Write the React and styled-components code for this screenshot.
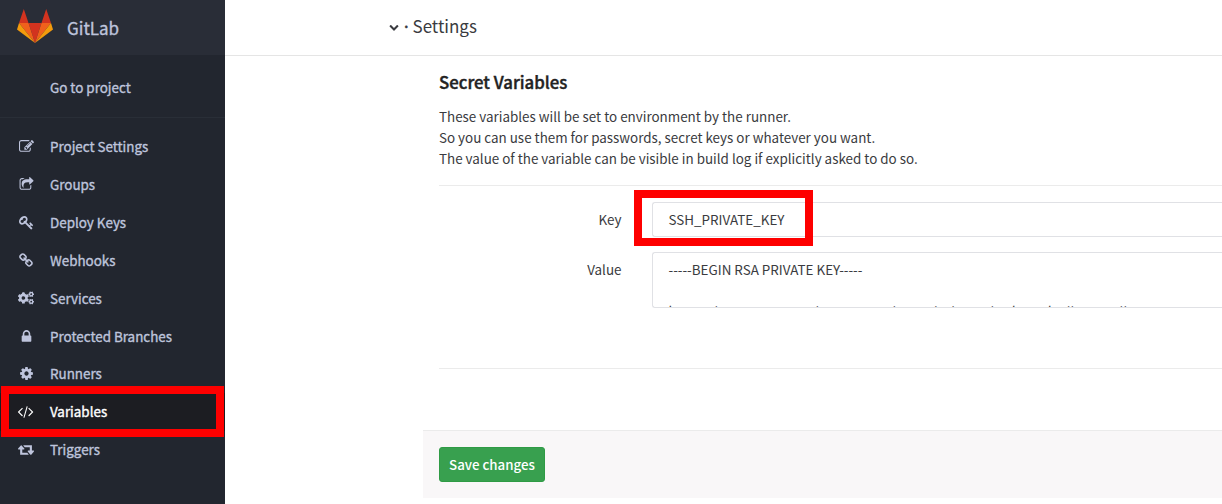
import React from "react";
import styled, { createGlobalStyle } from "styled-components";
import { FaCogs } from "react-icons/fa";

const GlobalStyle = createGlobalStyle`
  *, *::before, *::after { box-sizing: border-box; }
  body {
    margin: 0;
    background: #fff;
    color: #3a3b40;
    font-family: "Noto Sans CJK SC", "Noto Sans", sans-serif;
    font-size: 13.42px;
    line-height: 21px;
    overflow: hidden;
  }
  h4, p { margin: 0; }
`;

const Page = styled.div`
  display: flex;
  width: 1222px;
  height: 504px;
  overflow: hidden;
`;

const Sidebar = styled.aside`
  flex: 0 0 225px;
  height: 504px;
  background: #22262f;
  color: #bec4dc;
  -webkit-text-stroke: 0.35px currentColor;
`;

const Brand = styled.div`
  display: flex;
  align-items: center;
  gap: 14px;
  height: 55px;
  padding: 0 0 0 17px;
  background: #292d37;
  font-size: 17px;
`;

const BrandLogo = styled.svg`
  display: block;
  width: 36px;
  height: 34px;
  margin-top: -4px;
`;

const BrandName = styled.span`
  margin-top: -1px;
`;

const BackLink = styled.div`
  display: flex;
  align-items: center;
  height: 63px;
  padding: 3px 0 0 50px;
  border-bottom: 1px solid #292e37;
`;

const Nav = styled.nav`
  padding-top: 10px;
`;

const NavItem = styled.div`
  position: relative;
  display: flex;
  align-items: center;
  gap: 16px;
  height: 37.85px;
  padding-left: 18px;
  color: ${(p) => (p.$active ? "#fff" : "inherit")};
  background: ${(p) => (p.$active ? "#1c1d22" : "transparent")};
`;

const IconSlot = styled.span`
  display: flex;
  flex: 0 0 16px;
  min-width: 0;
  justify-content: center;
`;

const Glyph = styled.svg`
  display: block;
  flex: none;
  height: ${(p) => p.$size || 15}px;
  fill: currentColor;
`;

const Highlight = styled.div`
  position: absolute;
  left: ${(p) => p.$left};
  top: ${(p) => p.$top};
  width: ${(p) => p.$width};
  height: ${(p) => p.$height};
  border: 8px solid #fe0000;
  z-index: 2;
`;

const Main = styled.main`
  flex: 1;
  min-width: 0;
`;

const TitleBar = styled.header`
  display: flex;
  align-items: center;
  gap: 5px;
  height: 56px;
  padding: 0 0 2px 164px;
  border-bottom: 1px solid #e5e5e5;
  font-size: 17px;
`;

const Dot = styled.span`
  width: 3.5px;
  font-family: "Noto Sans", sans-serif;
  -webkit-text-stroke: 0.5px currentColor;
`;

const PageTitle = styled.span`
  margin: -2px 0 0 0;
`;

const Content = styled.section`
  padding: 14px 0 0 214px;
`;

const Heading = styled.h4`
  color: #222;
  font-size: 16.8px;
  line-height: 24px;
  font-weight: 500;
  -webkit-text-stroke: 0.4px currentColor;
`;

const Intro = styled.p`
  margin-top: 12px;
  padding-bottom: 16px;
  border-bottom: 1px solid #ebebeb;
`;

const Row = styled.div`
  position: relative;
  display: flex;
  margin-top: ${(p) => p.$gap}px;
`;

const Label = styled.label`
  width: 183px;
  margin-right: 30px;
  padding: 7px 0.5px 0 0;
  text-align: right;
`;

const Field = styled.div`
  flex: 1;
  height: ${(p) => p.$height}px;
  padding: 6px 15.5px;
  border: 1px solid #e0e1e5;
  border-right: 0;
  border-radius: 3px 0 0 3px;
  overflow: hidden;
  white-space: pre;
`;

const Divider = styled.div`
  height: 1px;
  margin-top: 60px;
  background: #ebebeb;
`;

const Footer = styled.footer`
  height: 68px;
  margin: 61px 0 0 198px;
  padding: 16px;
  background: #f9f7f8;
  border-top: 1px solid #ebebeb;
`;

const SaveButton = styled.button`
  width: 106px;
  height: 35px;
  padding: 0 0 1px;
  border: 1px solid #2f9b45;
  border-radius: 3px;
  background: #38a04f;
  color: #fff;
  font: 500 13.3px/21px "Noto Sans CJK SC", sans-serif;
  white-space: nowrap;
`;

const ICONS = {
  edit: "M888 1184l116-116-152-152-116 116v56h96v96h56zm440-720q-16-16-33 1l-350 350q-17 17-1 33t33-1l350-350q17-17 1-33zm80 594v190q0 119-84.5 203.5t-203.5 84.5h-832q-119 0-203.5-84.5t-84.5-203.5v-832q0-119 84.5-203.5t203.5-84.5h832q63 0 117 25 15 7 18 23 3 17-9 29l-49 49q-14 14-32 8-23-6-45-6h-832q-66 0-113 47t-47 113v832q0 66 47 113t113 47h832q66 0 113-47t47-113v-126q0-13 9-22l64-64q15-15 35-7t20 29zm-96-738l288 288-672 672h-288v-288zm444 132l-92 92-288-288 92-92q28-28 68-28t68 28l152 152q28 28 28 68t-28 68z",
  share: "M1472 989v259q0 119-84.5 203.5t-203.5 84.5h-832q-119 0-203.5-84.5t-84.5-203.5v-832q0-119 84.5-203.5t203.5-84.5h255q13 0 22.5 9.5t9.5 22.5q0 27-26 32-77 26-133 60-10 4-16 4h-112q-66 0-113 47t-47 113v832q0 66 47 113t113 47h832q66 0 113-47t47-113v-214q0-19 18-29 28-13 54-37 16-16 35-8 21 9 21 29zm237-496l-384 384q-18 19-45 19-12 0-25-5-39-17-39-59v-192h-160q-323 0-438 131-119 137-74 473 3 23-20 34-8 2-12 2-16 0-26-13-10-14-21-31t-39.5-68.5-49.5-99.5-38.5-114-17.5-122q0-49 3.5-91t14-90 28-88 47-81.5 68.5-74 94.5-61.5 124.5-48.5 159.5-30.5 196.5-11h160v-192q0-42 39-59 13-5 25-5 26 0 45 19l384 384q19 19 19 45t-19 45z",
  key: "M832 512q0-80-56-136t-136-56-136 56-56 136q0 42 19 83-41-19-83-19-80 0-136 56t-56 136 56 136 136 56 136-56 56-136q0-42-19-83 41 19 83 19 80 0 136-56t56-136zm851 704q0 17-49 66t-66 49q-9 0-28.5-16t-36.5-33-38.5-40-24.5-26l-96 96 220 220q28 28 28 68 0 42-39 81t-81 39q-40 0-68-28l-671-671q-176 131-365 131-163 0-265.5-102.5t-102.5-265.5q0-160 95-313t248-248 313-95q163 0 265.5 102.5t102.5 265.5q0 189-131 365l355 355 96-96q-3-3-26-24.5t-40-38.5-33-36.5-16-28.5q0-17 49-66t66-49q13 0 23 10 6 6 46 44.5t82 79.5 86.5 86 73 78 28.5 41z",
  link: "M1456 1216q0-40-28-68l-208-208q-28-28-68-28-42 0-72 32 3 3 19 18.5t21.5 21.5 15 19 13 25.5 3.5 27.5q0 40-28 68t-68 28q-15 0-27.5-3.5t-25.5-13-19-15-21.5-21.5-18.5-19q-33 31-33 73 0 40 28 68l206 207q27 27 68 27 40 0 68-26l147-146q28-28 28-67zm-703-705q0-40-28-68l-206-207q-28-28-68-28-39 0-68 27l-147 146q-28 28-28 67 0 40 28 68l208 208q27 27 68 27 42 0 72-31-3-3-19-18.5t-21.5-21.5-15-19-13-25.5-3.5-27.5q0-40 28-68t68-28q15 0 27.5 3.5t25.5 13 19 15 21.5 21.5 18.5 19q33-31 33-73zm895 705q0 120-85 203l-147 146q-83 83-203 83-121 0-204-85l-206-207q-83-83-83-203 0-123 88-209l-88-88q-86 88-208 88-120 0-204-84l-208-208q-84-84-84-204t85-203l147-146q83-83 203-83 121 0 204 85l206 207q83 83 83 203 0 123-88 209l88 88q86-88 208-88 120 0 204 84l208 208q84 84 84 204z",
  lock: "M640 768h512v-192q0-106-75-181t-181-75-181 75-75 181v192zm832 96v576q0 40-28 68t-68 28h-960q-40 0-68-28t-28-68v-576q0-40 28-68t68-28h32v-192q0-184 132-316t316-132 316 132 132 316v192h32q40 0 68 28t28 68z",
  cog: "M1152 896q0-106-75-181t-181-75-181 75-75 181 75 181 181 75 181-75 75-181zm512-109v222q0 12-8 23t-20 13l-185 28q-19 54-39 91 35 50 107 138 10 12 10 25t-9 23q-27 37-99 108t-94 71q-12 0-26-9l-138-108q-44 23-91 38-16 136-29 186-7 28-36 28h-222q-14 0-24.5-8.5t-11.5-21.5l-28-184q-49-16-90-37l-141 107q-10 9-25 9-14 0-25-11-126-114-165-168-7-10-7-23 0-12 8-23 15-21 51-66.5t54-70.5q-27-50-41-99l-183-27q-13-2-21-12.5t-8-23.5v-222q0-12 8-23t19-13l186-28q14-46 39-92-40-57-107-138-10-12-10-24 0-10 9-23 26-36 98.5-107.5t94.5-71.5q13 0 26 10l138 107q44-23 91-38 16-136 29-186 7-28 36-28h222q14 0 24.5 8.5t11.5 21.5l28 184q49 16 90 37l142-107q9-9 24-9 13 0 25 10 129 119 165 170 7 8 7 22 0 12-8 23-15 21-51 66.5t-54 70.5q26 50 41 98l183 28q13 2 21 12.5t8 23.5z",
  code: "M681 1399l-50 50q-10 10-23 10t-23-10l-466-466q-10-10-10-23t10-23l466-466q10-10 23-10t23 10l50 50q10 10 10 23t-10 23l-393 393 393 393q10 10 10 23t-10 23zm591-1067l-373 1291q-4 13-15.5 19.5t-23.5 2.5l-62-17q-13-4-19.5-15.5t-2.5-24.5l373-1291q4-13 15.5-19.5t23.5-2.5l62 17q13 4 19.5 15.5t2.5 24.5zm657 651l-466 466q-10 10-23 10t-23-10l-50-50q-10-10-10-23t10-23l393-393-393-393q-10-10-10-23t10-23l50-50q10-10 23-10t23 10l466 466q10 10 10 23t-10 23z",
  retweet: "M1280 1504q0 13-9.5 22.5t-22.5 9.5h-960q-8 0-13.5-2t-9-7-5.5-8-3-11.5-1-11.5v-600h-192q-26 0-45-19t-19-45q0-24 15-41l320-384q19-22 49-22t49 22l320 384q15 17 15 41 0 26-19 45t-45 19h-192v384h576q16 0 25 11l160 192q7 10 7 21zm640-416q0 24-15 41l-320 384q-20 23-49 23t-49-23l-320-384q-15-17-15-41 0-26 19-45t45-19h192v-384h-576q-16 0-25-12l-160-192q-7-9-7-20 0-13 9.5-22.5t22.5-9.5h960q8 0 13.5 2t9 7 5.5 8 3 11.5 1 11.5v600h192q26 0 45 19t19 45z",
  chevron: "M1683 808l-742 741q-19 19-45 19t-45-19l-742-741q-19-19-19-45.5t19-45.5l166-165q19-19 45-19t45 19l531 531 531-531q19-19 45-19t45 19l166 165q19 19 19 45.5t-19 45.5z",
};

const WIDE = { code: 2048, retweet: 1920 };

function Icon({ name, size }) {
  if (name === "cogs") return <FaCogs size={16} />;
  return (
    <Glyph viewBox={`0 0 ${WIDE[name] || 1792} 1792`} $size={size} aria-hidden="true">
      <path d={ICONS[name]} stroke="none" />
    </Glyph>
  );
}

const NAV = [
  ["edit", "Project Settings"],
  ["share", "Groups"],
  ["key", "Deploy Keys"],
  ["link", "Webhooks"],
  ["cogs", "Services"],
  ["lock", "Protected Branches"],
  ["cog", "Runners"],
  ["code", "Variables"],
  ["retweet", "Triggers"],
];

const KEY_TEXT =
  "-----BEGIN RSA PRIVATE KEY-----\n\nhaaaaalaaaaaaaaaaaaclaaaaaaaaarlaaaaalcclaaaarlccdaaardaallaaaaaallaa";

export default function App() {
  return (
    <>
      <GlobalStyle />
      <Page>
        <Sidebar>
          <Brand>
            <BrandLogo viewBox="0 0 36 34" aria-label="GitLab">
              <path fill="#d2331f" d="M6.8 0 2 14h9.5zM29.2 0 34 14h-9.5z" />
              <path fill="#d2331f" d="M11.5 14h13L18 34z" />
              <path fill="#f0601c" d="M2 14h9.5L18 34zM34 14h-9.5L18 34z" />
              <path fill="#f39b0c" d="M2 14 0 20.5 18 34zM34 14l2 6.5L18 34z" />
            </BrandLogo>
            <BrandName>GitLab</BrandName>
          </Brand>
          <BackLink>Go to project</BackLink>
          <Nav>
            {NAV.map(([icon, text]) => (
              <NavItem key={text} $active={text === "Variables"}>
                <IconSlot>
                  <Icon name={icon} />
                </IconSlot>
                {text}
                {text === "Variables" && (
                  <Highlight $left="1px" $top="-7px" $width="223px" $height="51px" />
                )}
              </NavItem>
            ))}
          </Nav>
        </Sidebar>
        <Main>
          <TitleBar>
            <Icon name="chevron" size={10} />
            <Dot>·</Dot>
            <PageTitle>Settings</PageTitle>
          </TitleBar>
          <Content>
            <Heading>Secret Variables</Heading>
            <Intro>
              These variables will be set to environment by the runner.
              <br />
              So you can use them for passwords, secret keys or whatever you want.
              <br />
              The value of the variable can be visible in build log if explicitly asked to do so.
            </Intro>
            <Row $gap={16}>
              <Label>Key</Label>
              <Field $height={35}>SSH_PRIVATE_KEY</Field>
              <Highlight $left="195px" $top="-12px" $width="179px" $height="56px" />
            </Row>
            <Row $gap={15}>
              <Label>Value</Label>
              <Field $height={56}>{KEY_TEXT}</Field>
            </Row>
            <Divider />
          </Content>
          <Footer>
            <SaveButton>Save changes</SaveButton>
          </Footer>
        </Main>
      </Page>
    </>
  );
}
